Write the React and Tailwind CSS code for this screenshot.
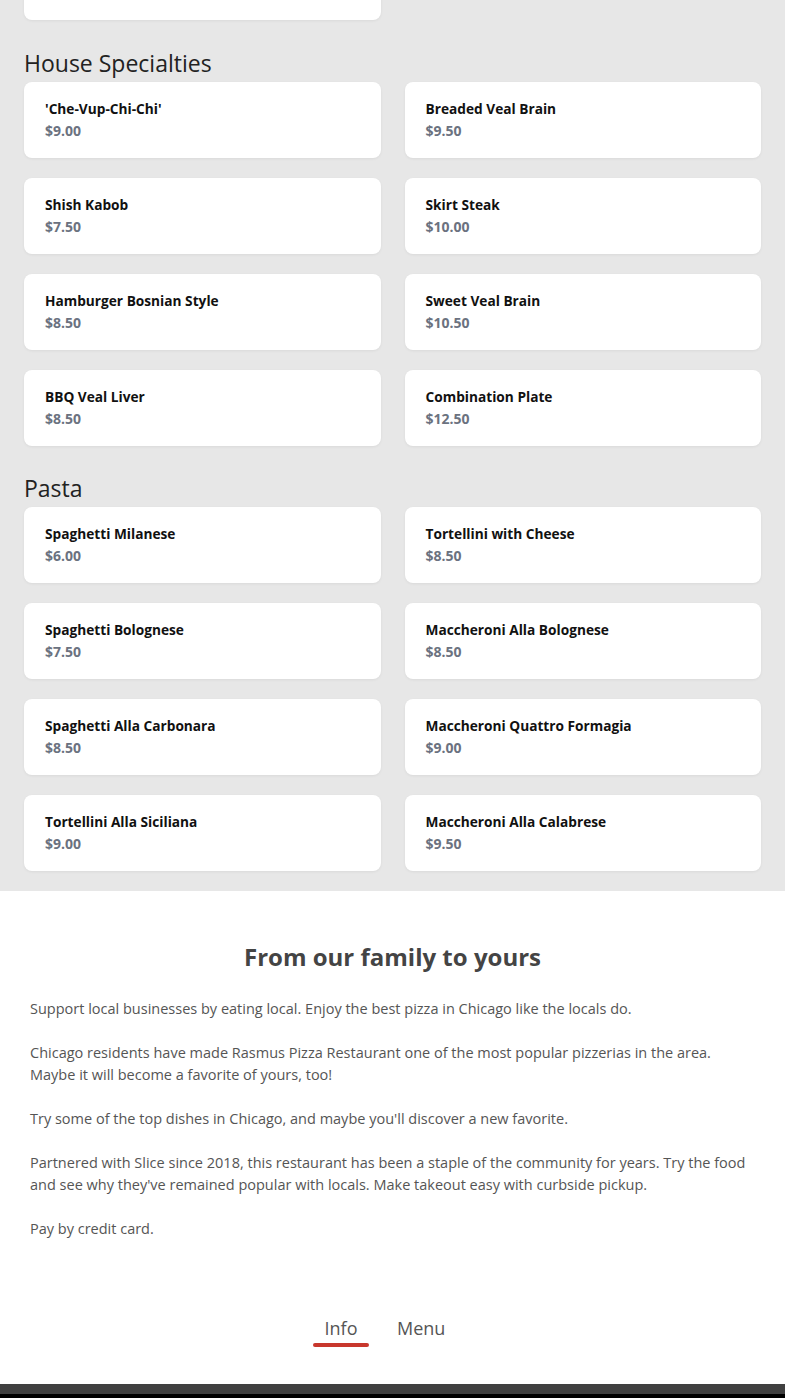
const sections = [
  {
    title: 'House Specialties',
    items: [
      ["'Che-Vup-Chi-Chi'", '$9.00'],
      ['Breaded Veal Brain', '$9.50'],
      ['Shish Kabob', '$7.50'],
      ['Skirt Steak', '$10.00'],
      ['Hamburger Bosnian Style', '$8.50'],
      ['Sweet Veal Brain', '$10.50'],
      ['BBQ Veal Liver', '$8.50'],
      ['Combination Plate', '$12.50'],
    ],
  },
  {
    title: 'Pasta',
    items: [
      ['Spaghetti Milanese', '$6.00'],
      ['Tortellini with Cheese', '$8.50'],
      ['Spaghetti Bolognese', '$7.50'],
      ['Maccheroni Alla Bolognese', '$8.50'],
      ['Spaghetti Alla Carbonara', '$8.50'],
      ['Maccheroni Quattro Formagia', '$9.00'],
      ['Tortellini Alla Siciliana', '$9.00'],
      ['Maccheroni Alla Calabrese', '$9.50'],
    ],
  },
]

const paragraphs = [
  'Support local businesses by eating local. Enjoy the best pizza in Chicago like the locals do.',
  'Chicago residents have made Rasmus Pizza Restaurant one of the most popular pizzerias in the area. Maybe it will become a favorite of yours, too!',
  "Try some of the top dishes in Chicago, and maybe you'll discover a new favorite.",
  "Partnered with Slice since 2018, this restaurant has been a staple of the community for years. Try the food and see why they've remained popular with locals. Make takeout easy with curbside pickup.",
  'Pay by credit card.',
]

function ItemCard({ name, price }) {
  return (
    <div className="h-[76px] rounded-lg bg-white px-[21px] pt-[16px] shadow-[0_1px_3px_rgba(0,0,0,0.06)]">
      <div className="text-[13.7px] font-bold leading-[22px] text-[#111]">{name}</div>
      <div className="text-[14px] font-bold leading-[21px] text-[#6b7280]">{price}</div>
    </div>
  )
}

export default function App() {
  return (
    <div className="min-h-[1398px] bg-black font-['Open_Sans',sans-serif]">
      <div className="bg-[#e7e7e7] px-6 pb-5">
        <div className="grid grid-cols-2 gap-6">
          <div className="-mt-[56px]">
            <ItemCard name="Garlic Bread" price="$4.00" />
          </div>
        </div>
        {sections.map((s, i) => (
          <div key={s.title} className={i === 0 ? 'mt-[27px]' : 'mt-[26px]'}>
            <h2 className="mb-[3px] text-[23px] leading-[32px] text-[#222]">{s.title}</h2>
            <div className="grid grid-cols-2 gap-x-6 gap-y-5">
              {s.items.map(([n, p]) => (
                <ItemCard key={n} name={n} price={p} />
              ))}
            </div>
          </div>
        ))}
      </div>

      <div className="bg-white px-[30px] pt-[48px]">
        <h2 className="text-center text-[24px] font-bold leading-[36px] text-[#444]">From our family to yours</h2>
        <div className="mt-[23px] space-y-[22px] text-[14.5px] leading-[22px] text-[#555]">
          {paragraphs.map((p) => (
            <p key={p}>{p}</p>
          ))}
        </div>
        <div className="mt-[75px] flex gap-[28px] pb-[37px] pl-[283px]">
          <div className="flex w-[56px] flex-col items-center">
            <span className="text-[18px] leading-[26px] text-[#555]">Info</span>
            <span className="mt-[2px] h-[4px] w-[56px] rounded-full bg-[#c8372d]" />
          </div>
          <div className="flex flex-col items-center">
            <span className="text-[18px] leading-[26px] text-[#555]">Menu</span>
          </div>
        </div>
      </div>
      <div className="h-[10px] bg-[#404040]" />
    </div>
  )
}
